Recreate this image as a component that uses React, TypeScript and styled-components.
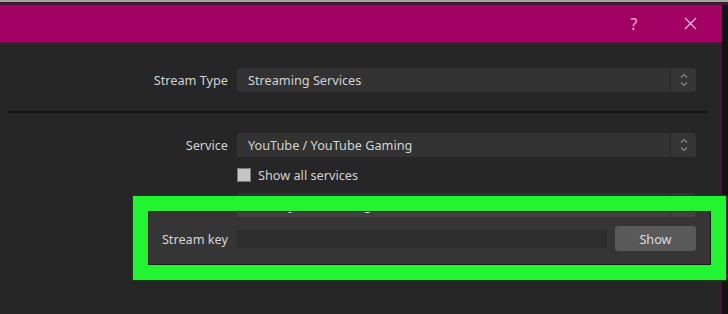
import React from "react";
import styled, { createGlobalStyle } from "styled-components";

const Global = createGlobalStyle`
  html, body { margin: 0; padding: 0; background: #121212; }
  body { width: 728px; height: 314px; overflow: hidden; font-family: "Noto Sans", "Open Sans", sans-serif; }
  #root { position: relative; width: 728px; height: 314px; }
`;

const TopStrip = styled.div`
  height: 2px;
  background: #a4a4a4;
  border-bottom: 3px solid #3a1a2e;
`;

const Window = styled.div`
  width: 722px;
  height: 309px;
  display: flex;
  flex-direction: column;
`;

const TitleBar = styled.div`
  height: 38px;
  background: #a20062;
  display: flex;
  align-items: center;
  justify-content: flex-end;
  padding-right: 24px;
  gap: 40px;
  box-sizing: border-box;
  border-bottom: 1px solid #6a0a48;
`;

const TitleButton = styled.div`
  color: #eab4d6;
  font-size: 16px;
  width: 16px;
  display: flex;
  justify-content: center;
  align-items: center;
`;

const Content = styled.div`
  flex: 1;
  width: 720px;
  background: #262626;
  border-right: 2px solid #4a0f38;
  display: flex;
  flex-direction: column;
  padding-top: 25px;
`;

const Row = styled.div<{ $mt?: number; $h?: number }>`
  display: flex;
  align-items: center;
  gap: 9px;
  margin-top: ${(p) => p.$mt ?? 0}px;
  height: ${(p) => p.$h ?? 24}px;
`;

const Label = styled.div`
  width: 228px;
  text-align: right;
  color: #d2d2d2;
  font-size: 12.7px;
  flex-shrink: 0;
`;

const Combo = styled.div`
  width: 459px;
  height: 24px;
  display: flex;
  gap: 1px;
`;

const ComboBox = styled.div`
  flex: 1;
  background: #323232;
  border-radius: 3px 0 0 3px;
  color: #d2d2d2;
  font-size: 12.7px;
  padding-left: 11px;
  display: flex;
  align-items: center;
`;

const Spin = styled.div`
  width: 25px;
  background: #353535;
  border-radius: 0 3px 3px 0;
  display: flex;
  align-items: center;
  justify-content: center;
`;

const Separator = styled.div`
  margin: 19px 0 0 8px;
  width: 699px;
  height: 2px;
  background: #121212;
`;

const CheckRow = styled.div`
  display: flex;
  align-items: center;
  gap: 7px;
  margin-left: 237px;
  margin-top: 11px;
  height: 14px;
`;

const CheckBox = styled.div`
  width: 12px;
  height: 12px;
  background: #c4c4c4;
  border: 1px solid #7a7a7a;
`;

const CheckLabel = styled.div`
  color: #d2d2d2;
  font-size: 12.7px;
`;

const KeyInput = styled.div`
  width: 370px;
  height: 18px;
  background: #1e1e1e;
`;

const ShowButton = styled.div`
  width: 81px;
  height: 25px;
  margin-left: -1px;
  background: #4d4d4d;
  border-radius: 3px;
  color: #dadada;
  font-size: 12.7px;
  display: flex;
  align-items: center;
  justify-content: center;
`;

const Highlight = styled.div`
  position: absolute;
  left: 133px;
  top: 196px;
  width: 593px;
  height: 84px;
  box-sizing: border-box;
  border: 15px solid #22f430;
  background: rgba(255, 255, 255, 0.07);
  box-shadow: inset 0 0 0 1px #1a1a1a, 0 0 0 1px #1c3a1c;
  pointer-events: none;
`;

const SpinArrows = () => (
  <svg width="10" height="16" viewBox="0 0 10 16" fill="none" stroke="#8a8a8a" strokeWidth="1.2">
    <path d="M2 5.5 L5 2.5 L8 5.5" />
    <path d="M2 10.5 L5 13.5 L8 10.5" />
  </svg>
);

const CloseIcon = () => (
  <svg width="13" height="13" viewBox="0 0 13 13" stroke="#eab4d6" strokeWidth="1.4">
    <path d="M1 1 L12 12 M12 1 L1 12" />
  </svg>
);

export default function App() {
  return (
    <>
      <Global />
      <TopStrip />
      <Window>
        <TitleBar>
          <TitleButton>?</TitleButton>
          <TitleButton>
            <CloseIcon />
          </TitleButton>
        </TitleBar>
        <Content>
          <Row>
            <Label>Stream Type</Label>
            <Combo>
              <ComboBox>Streaming Services</ComboBox>
              <Spin>
                <SpinArrows />
              </Spin>
            </Combo>
          </Row>
          <Separator />
          <Row $mt={20}>
            <Label>Service</Label>
            <Combo>
              <ComboBox>YouTube / YouTube Gaming</ComboBox>
              <Spin>
                <SpinArrows />
              </Spin>
            </Combo>
          </Row>
          <CheckRow>
            <CheckBox />
            <CheckLabel>Show all services</CheckLabel>
          </CheckRow>
          <Row $mt={11}>
            <Label>Server</Label>
            <Combo>
              <ComboBox>Primary YouTube ingest server</ComboBox>
              <Spin>
                <SpinArrows />
              </Spin>
            </Combo>
          </Row>
          <Row $mt={9} $h={25}>
            <Label>Stream key</Label>
            <KeyInput />
            <ShowButton>Show</ShowButton>
          </Row>
        </Content>
      </Window>
      <Highlight />
    </>
  );
}
